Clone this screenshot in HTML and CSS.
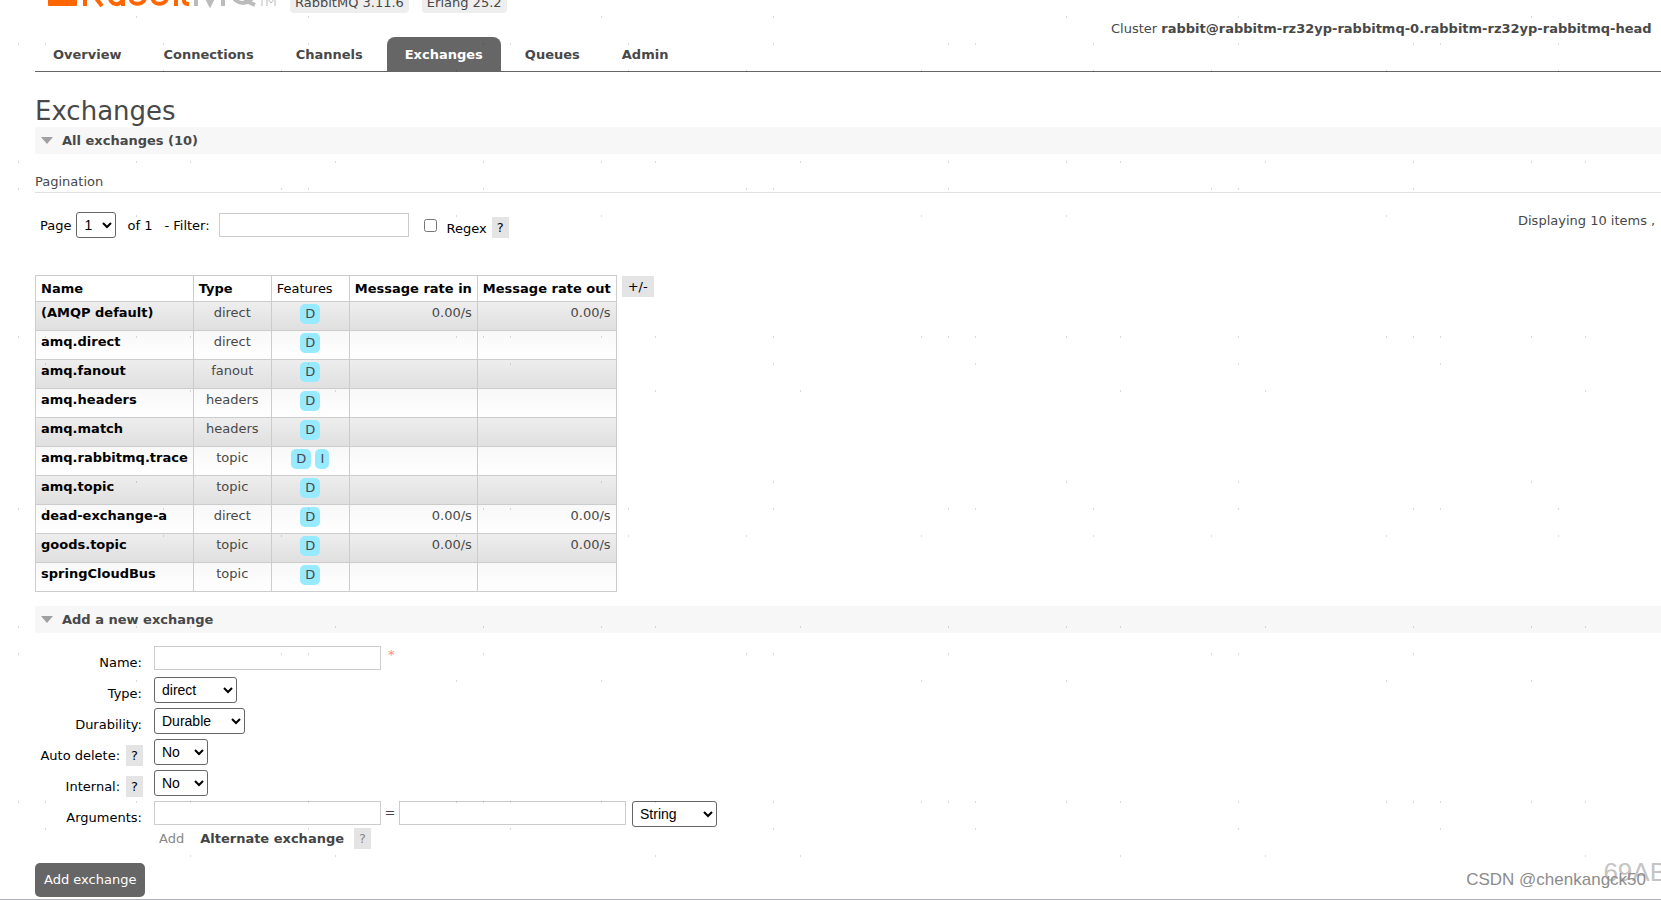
FILE: index.html
```html
<!DOCTYPE html>
<html lang="en">
<head>
<meta charset="utf-8">
<title>RabbitMQ Management</title>
<link rel="stylesheet" href="styles.css">
</head>
<body>
<header class="header">
  <div class="brand">
    <svg class="logo" width="228" height="8" viewBox="0 0 228 8" role="img" aria-label="RabbitMQ">
      <path fill="#f60" d="M0 0H29V5Q29 6 28 6H1Q0 6 0 5Z"/>
      <g fill="none" stroke="#f60" stroke-width="4">
        <path d="M37-6V6M47-3L54 6M62-6C60 7 75 7 75-3V6M83-8V0C85 6 98 5 97-4M105-8V0C107 6 120 5 119-4M128-6V6M136-8V1Q136 4 141 4"/>
      </g>
      <g fill="none" stroke="#bbb" stroke-width="4">
        <path d="M148-6V6M157-6L162 4L167-6M175-6V6M184-6C187 6 204 6 205-6M196 0L207 5"/>
      </g>
      <path fill="none" stroke="#bbb" d="M214-2V6M211-2H217M219 6V-2L223 3L227-2V6"/>
    </svg>
    <span class="version">RabbitMQ 3.11.6</span>
    <span class="version">Erlang 25.2</span>
  </div>
  <p class="cluster">Cluster <b>rabbit@rabbitm-rz32yp-rabbitmq-0.rabbitm-rz32yp-rabbitmq-head</b></p>
</header>
<nav class="tabs">
  <a href="#">Overview</a>
  <a href="#">Connections</a>
  <a href="#">Channels</a>
  <a href="#" class="selected" aria-current="page">Exchanges</a>
  <a href="#">Queues</a>
  <a href="#">Admin</a>
</nav>
<main class="main">
  <h1>Exchanges</h1>
  <h2>All exchanges (10)</h2>
  <h3>Pagination</h3>
  <div class="pagination">
    <label for="page">Page</label>
    <select id="page" class="page-select"><option>1</option></select>
    <span class="of">of 1</span>
    <label for="filter">- Filter:</label>
    <input id="filter" class="filter" type="text">
    <input id="regex" class="check" type="checkbox">
    <label for="regex" class="regex">Regex</label>
    <button type="button" class="help">?</button>
    <span class="displaying">Displaying 10 items ,</span>
  </div>
  <div class="listing">
    <table class="list">
      <thead><tr><th>Name</th><th class="mid">Type</th><th class="mid plain">Features</th><th>Message rate in</th><th>Message rate out</th></tr></thead>
      <tbody>
      <tr><td><a href="#">(AMQP default)</a></td><td>direct</td><td><abbr>D</abbr></td><td>0.00/s</td><td>0.00/s</td></tr>
      <tr><td><a href="#">amq.direct</a></td><td>direct</td><td><abbr>D</abbr></td><td></td><td></td></tr>
      <tr><td><a href="#">amq.fanout</a></td><td>fanout</td><td><abbr>D</abbr></td><td></td><td></td></tr>
      <tr><td><a href="#">amq.headers</a></td><td>headers</td><td><abbr>D</abbr></td><td></td><td></td></tr>
      <tr><td><a href="#">amq.match</a></td><td>headers</td><td><abbr>D</abbr></td><td></td><td></td></tr>
      <tr><td><a href="#">amq.rabbitmq.trace</a></td><td>topic</td><td><abbr>D</abbr> <abbr>I</abbr></td><td></td><td></td></tr>
      <tr><td><a href="#">amq.topic</a></td><td>topic</td><td><abbr>D</abbr></td><td></td><td></td></tr>
      <tr><td><a href="#">dead-exchange-a</a></td><td>direct</td><td><abbr>D</abbr></td><td>0.00/s</td><td>0.00/s</td></tr>
      <tr><td><a href="#">goods.topic</a></td><td>topic</td><td><abbr>D</abbr></td><td>0.00/s</td><td>0.00/s</td></tr>
      <tr><td><a href="#">springCloudBus</a></td><td>topic</td><td><abbr>D</abbr></td><td></td><td></td></tr>
      </tbody>
    </table>
    <button type="button" class="help columns">+/-</button>
  </div>
  <h2>Add a new exchange</h2>
  <form class="add">
    <div class="fields">
      <label for="name">Name:</label>
      <div class="value"><input id="name" class="text" type="text"><span class="mand">*</span></div>
      <label for="type">Type:</label>
      <div class="value"><select id="type" class="w-type"><option>direct</option></select></div>
      <label for="durability">Durability:</label>
      <div class="value"><select id="durability" class="w-durable"><option>Durable</option></select></div>
      <div class="caption"><label for="auto">Auto delete:</label><button type="button" class="help">?</button></div>
      <div class="value"><select id="auto" class="w-no"><option>No</option></select></div>
      <div class="caption"><label for="internal">Internal:</label><button type="button" class="help">?</button></div>
      <div class="value"><select id="internal" class="w-no"><option>No</option></select></div>
      <label for="key">Arguments:</label>
      <div class="value"><input id="key" class="text" type="text"><span class="eq">=</span><input class="text" type="text" aria-label="Argument value"><select class="w-string" aria-label="Argument type"><option>String</option></select></div>
    </div>
    <div class="shortcuts"><span>Add</span><a href="#">Alternate exchange</a><button type="button" class="help dim">?</button></div>
    <button type="submit" class="submit">Add exchange</button>
  </form>
</main>
<svg class="specks" width="100%" height="100%" aria-hidden="true">
  <defs>
    <pattern id="specks" width="465" height="465" patternUnits="userSpaceOnUse">
      <path fill="#000" fill-opacity=".14" d="M308 16h1v2h-1zM136 16h1v2h-1zM308 43h1v2h-1zM18 43h1v2h-1zM45 43h1v2h-1zM163 43h1v2h-1zM281 70h1v2h-1zM456 70h1v2h-1zM163 70h1v2h-1zM335 161h1v2h-1zM18 161h1v2h-1zM136 161h1v2h-1zM190 161h1v2h-1zM281 188h1v2h-1zM308 188h1v2h-1zM18 188h1v2h-1zM456 215h1v2h-1zM136 215h1v2h-1zM308 336h1v2h-1zM456 336h1v2h-1zM18 336h1v2h-1zM45 336h1v2h-1zM136 336h1v2h-1zM190 336h1v2h-1zM308 363h1v2h-1zM45 363h1v2h-1zM335 390h1v2h-1zM190 390h1v2h-1z"/>
    </pattern>
  </defs>
  <rect width="100%" height="100%" fill="url(#specks)"/>
</svg>
<div class="mark mark-code">69AB</div>
<div class="mark mark-author">CSDN @chenkangck50</div>
</body>
</html>
```
FILE: styles.css
```css
* { box-sizing: border-box; }
body {
  margin: 0;
  min-height: 100vh;
  position: relative;
  overflow: hidden;
  border-bottom: 1px solid #b0b0b8;
  background: #fff;
  color: #484848;
  font: 13px/17px Verdana, "DejaVu Sans", sans-serif;
}
a { color: inherit; text-decoration: none; }
h1, h2, h3, p { margin: 0; }
button, input { font: inherit; }
.header { display: flex; justify-content: space-between; height: 37px; padding-left: 48px; }
.brand { display: flex; align-items: flex-start; }
.logo { margin-right: 14px; }
.version { margin: -6px 13px 0 0; padding: 0 5px 2px; background: #eee; border-radius: 4px; }
.cluster { width: 550px; padding-top: 20px; overflow: hidden; white-space: nowrap; }
.tabs { display: flex; margin-left: 35px; border-bottom: 1px solid #666; }
.tabs a { padding: 9px 18px 8px; margin-right: 6px; border-radius: 8px 8px 0 0; font-weight: bold; }
.tabs .selected { background: #666; color: #fff; }
.main { padding-left: 35px; }
h1 { padding-top: 24px; font-size: 26px; line-height: 31px; font-weight: normal; }
h2 { display: flex; align-items: center; gap: 9px; height: 27px; padding-left: 6px; background: #f7f7f7; font-size: 13px; }
h2::before { content: ""; border: 6px solid transparent; border-top: 7px solid #a0a0a0; border-bottom: 0; }
h3 { margin-top: 18px; padding: 1px 0 2px; border-bottom: 1px solid #e0e0e0; font-size: 13px; font-weight: normal; }
select { height: 26px; border: 1px solid #666; border-radius: 3px; background: #fff; color: #000; padding: 0 3px; font: 14px "Liberation Sans", Arial, sans-serif; }
.pagination { display: flex; align-items: center; margin: 19px 0 37px; padding-left: 5px; color: #000; }
.page-select { width: 40px; margin: 0 11px 0 5px; }
.of { margin-right: 12px; }
.filter { width: 190px; height: 24px; margin: 0 15px 0 9px; border: 1px solid #ccc; }
.check { width: 13px; height: 13px; margin: 0 10px 0 0; }
.regex { padding-top: 6px; }
.help { padding: 2px 5px; border: 0; background: #e4e4e4; color: #000; line-height: 17px; }
.pagination .help { margin: 4px 0 0 5px; }
.displaying { align-self: flex-start; width: 143px; margin-left: auto; color: #484848; white-space: nowrap; }
.listing { display: flex; align-items: flex-start; gap: 5px; margin-bottom: 14px; }
.list { border-collapse: collapse; }
.list th, .list td { border: 1px solid #ccc; padding: 4px 5px; text-align: center; }
.list th { height: 25px; color: #000; text-align: left; }
.list .mid { width: 78px; }
.list .plain { font-weight: normal; }
.list td { height: 29px; padding: 2px 5px; vertical-align: top; }
.list td:first-child { color: #000; font-weight: bold; text-align: left; }
.list td:nth-child(n+4) { text-align: right; }
.list tbody tr:nth-child(odd) { background: linear-gradient(#eee, #dfdfdf); }
.list tbody tr:nth-child(even) { background: linear-gradient(#f8f8f8, #fff); }
abbr { display: inline-block; padding: 2px 5px; border-radius: 5px; background: #98ebff; line-height: 16px; }
.columns { margin-top: 1px; padding: 2px 6px; }
.fields { display: grid; grid-template-columns: 108px 1fr; column-gap: 11px; row-gap: 4px; padding-top: 13px; }
.fields > label, .caption { padding-top: 8px; text-align: right; color: #000; }
.fields > label { padding-right: 1px; }
.caption { display: flex; justify-content: flex-end; align-items: center; gap: 6px; padding-top: 6px; }
.value { display: flex; align-items: flex-start; height: 27px; }
.text { width: 227px; height: 24px; border: 1px solid #ccc; }
.mand { padding-left: 7px; color: #f88; }
.eq { width: 18px; padding-top: 3px; text-align: center; }
.w-type { width: 83px; }
.w-durable { width: 91px; }
.w-no { width: 54px; }
.w-string { width: 85px; margin-left: 6px; }
.shortcuts { display: flex; align-items: center; padding-left: 124px; color: #888; }
.shortcuts a { margin: 0 10px 0 16px; color: #444; font-weight: bold; }
.dim { color: #888; }
.submit { margin-top: 14px; padding: 8px 9px; border: 0; border-radius: 5px; background: #666; color: #fff; line-height: 18px; }
.specks { position: absolute; inset: 0; pointer-events: none; }
.mark { position: absolute; white-space: nowrap; font-family: "Liberation Sans", Arial, sans-serif; }
.mark-code { right: -6px; bottom: 13px; color: #c4c4c4; font-size: 26px; line-height: 28px; }
.mark-author { right: 15px; bottom: 9px; color: #8c8c8c; font-size: 17px; line-height: 20px; }
```
